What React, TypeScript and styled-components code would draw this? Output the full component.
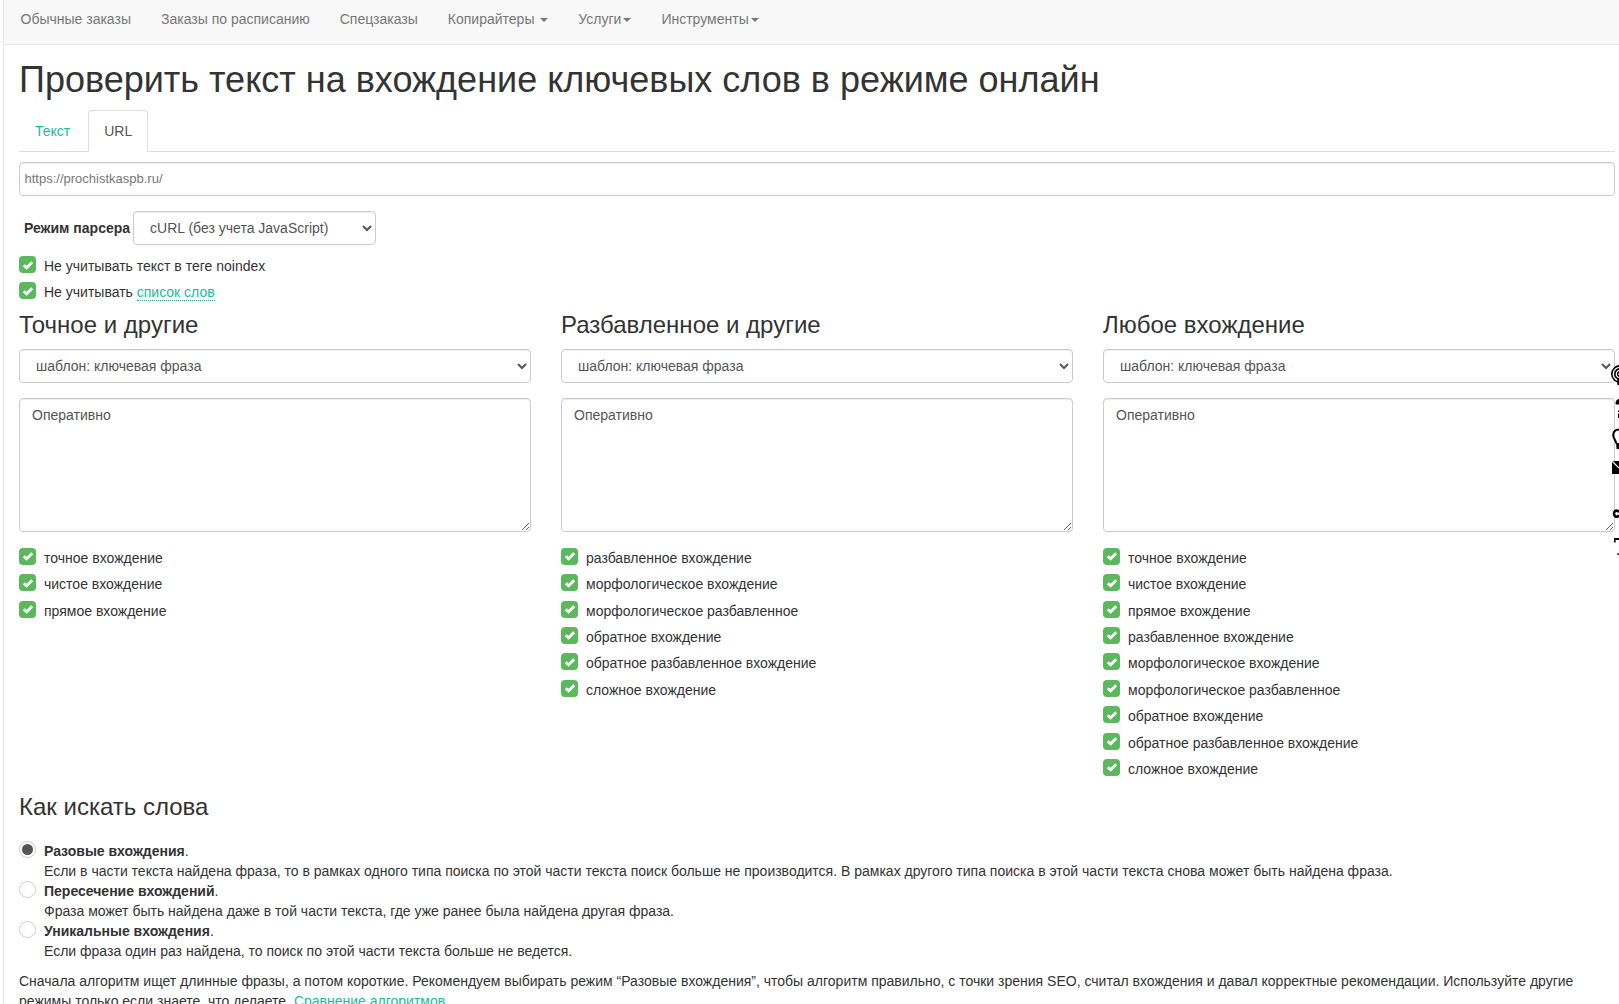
import * as React from 'react'
import styled, { createGlobalStyle } from 'styled-components'

const GlobalStyles = createGlobalStyle`
  html, body {
    margin: 0;
    height: 100%;
    overflow: hidden;
    background: #fff;
  }
  body {
    font-family: "Liberation Sans", Arial, sans-serif;
    font-size: 14px;
    line-height: 20px;
    color: #333;
  }
  * { box-sizing: border-box; }
`

const Page = styled.div`
  margin-left: 3px;
  margin-right: 4px;
  border-left: 1px solid #e7e7e7;
  height: 1004px;
`

const Navbar = styled.nav`
  display: flex;
  align-items: center;
  height: 45px;
  margin-right: -4px;
  padding: 0 0 6px 1.5px;
  background: #f8f8f8;
  border-bottom: 1px solid #e7e7e7;
`

const NavLink = styled.a`
  color: #777;
  padding: 0 15px;
  white-space: nowrap;
`

const Caret = styled.span`
  display: inline-block;
  width: 0;
  height: 0;
  margin-left: 2px;
  vertical-align: middle;
  border-top: 4px solid #777;
  border-left: 4px solid transparent;
  border-right: 4px solid transparent;
`

const Content = styled.main`
  padding: 0 0 0 15px;
`

const Title = styled.h1`
  margin: 15px 0 10px;
  font-size: 36px;
  line-height: 40px;
  font-weight: 500;
  color: #333;
`

const Tabs = styled.div`
  display: flex;
  gap: 2px;
  height: 42px;
  border-bottom: 1px solid #ddd;
`

const Tab = styled.a<{ $active?: boolean }>`
  height: 42px;
  padding: 10px 15px;
  border: 1px solid ${p => (p.$active ? '#ddd' : 'transparent')};
  border-bottom-color: ${p => (p.$active ? '#fff' : 'transparent')};
  border-radius: 4px 4px 0 0;
  color: ${p => (p.$active ? '#555' : '#18bc9c')};
  background: ${p => (p.$active ? '#fff' : 'transparent')};
`

const UrlInput = styled.input`
  display: block;
  width: 100%;
  height: 34px;
  margin-top: 10px;
  padding: 0 4.5px 2px;
  border: 1px solid #ccc;
  border-radius: 4px;
  font: 13px "Liberation Sans", Arial, sans-serif;
  color: #777;
  box-shadow: inset 0 1px 1px rgba(0, 0, 0, .075);
`

const ParserRow = styled.div`
  display: flex;
  align-items: center;
  gap: 3px;
  margin: 15px 0 0 5px;
`

const Select = styled.select<{ $wide?: boolean }>`
  display: block;
  width: ${p => (p.$wide ? '100%' : '243px')};
  height: 34px;
  padding: 0 12px;
  border: 1px solid #ccc;
  border-radius: 4px;
  background: #fff;
  color: #555;
  font: 14px "Liberation Sans", Arial, sans-serif;
  box-shadow: inset 0 1px 1px rgba(0, 0, 0, .075);
`

const CheckList = styled.div`
  display: flex;
  flex-direction: column;
`

const ParserChecks = styled(CheckList)`
  margin-top: 11px;
`

const CheckRow = styled.label`
  display: flex;
  align-items: flex-start;
  height: 26.4px;
  gap: 8px;
  line-height: 20px;
`

const CheckBox = styled.span`
  flex: none;
  display: flex;
  align-items: center;
  justify-content: center;
  width: 17px;
  height: 17px;
  border-radius: 4px;
  background: #5cb85c;
`

const DottedLink = styled.a`
  color: #18bc9c;
  border-bottom: 1px dotted #18bc9c;
`

const PlainLink = styled.a`
  color: #18bc9c;
`

const Columns = styled.div`
  display: grid;
  grid-template-columns: repeat(3, 1fr);
  gap: 30px;
`

const ColumnTitle = styled.h3`
  margin: 1px 0 9px;
  font-size: 24px;
  line-height: 30px;
  font-weight: 500;
`

const TextArea = styled.textarea`
  display: block;
  width: 100%;
  height: 134px;
  margin: 15px 0 16px;
  padding: 6px 12px;
  border: 1px solid #ccc;
  border-radius: 4px;
  color: #555;
  font: 14px/20px "Liberation Sans", Arial, sans-serif;
  box-shadow: inset 0 1px 1px rgba(0, 0, 0, .075);
`

const SectionTitle = styled.h3`
  margin: 0 0 19px;
  padding-top: 7px;
  font-size: 24px;
  line-height: 30px;
  font-weight: 500;
`

const RadioRow = styled.div`
  display: flex;
  gap: 8px;
`

const Radio = styled.span<{ $checked?: boolean }>`
  flex: none;
  display: flex;
  align-items: center;
  justify-content: center;
  width: 17px;
  height: 17px;
  border-radius: 50%;
  border: 1px solid #ccc;
  background: #fff;
  &::after {
    content: '';
    display: ${p => (p.$checked ? 'block' : 'none')};
    width: 11px;
    height: 11px;
    border-radius: 50%;
    background: #555;
  }
`

const Note = styled.p`
  margin: 10px 0 0;
  line-height: 20px;
`

const SideIcons = styled.svg`
  position: fixed;
  top: 360px;
  left: 1609px;
`

const CheckMark = () => (
  <svg width="12" height="12" viewBox="0 0 12 12" aria-hidden="true">
    <path d="M1.8 6.2 4.6 8.8 10.2 3.2" fill="none" stroke="#fff" strokeWidth="2.8" />
  </svg>
)

// floating share widget, almost entirely pushed past the right edge of the window
const FloatingIcons = () => (
  <SideIcons width="10" height="200" viewBox="1609 360 10 200" aria-hidden="true">
    <g fill="none" stroke="#000" strokeWidth="1.6">
      <circle cx="1620" cy="374" r="8.2" />
      <circle cx="1620" cy="374" r="5.2" />
      <circle cx="1620" cy="374" r="2.4" />
      <path d="M1618.5 378v7" strokeWidth="2.4" />
      <path d="M1619.5 429.5c-4-.4-6.6 2.6-6.3 6 .2 3 2.6 4.4 3 8" strokeWidth="2" />
      <path d="M1619 512c-3-3-5-.6-5 1.6s2 4.6 5 2" strokeWidth="2.6" />
    </g>
    <path d="M1615.5 403c.3-2.4 2-4 3.5-4v5.5h-3z" />
    <path d="M1618 410.5h1.2v1.5H1618zM1618 413.5h1.2v4.5H1618z" />
    <path d="M1616 443h3v6h-2.4z" />
    <path d="M1612 461h7v13h-7z" />
    <path d="M1612 461l7 7" stroke="#fff" strokeWidth="1.2" />
    <path d="M1614 538h5v2h-3.4v2.6H1614z" />
    <path d="M1617 553.5h2v1.2h-2z" />
  </SideIcons>
)

const Option: React.FC<{ children: React.ReactNode }> = ({ children }) => (
  <CheckRow>
    <CheckBox><CheckMark /></CheckBox>
    <span>{ children }</span>
  </CheckRow>
)

const columns = [
  {
    title: 'Точное и другие',
    options: ['точное вхождение', 'чистое вхождение', 'прямое вхождение'],
  },
  {
    title: 'Разбавленное и другие',
    options: [
      'разбавленное вхождение',
      'морфологическое вхождение',
      'морфологическое разбавленное',
      'обратное вхождение',
      'обратное разбавленное вхождение',
      'сложное вхождение',
    ],
  },
  {
    title: 'Любое вхождение',
    options: [
      'точное вхождение',
      'чистое вхождение',
      'прямое вхождение',
      'разбавленное вхождение',
      'морфологическое вхождение',
      'морфологическое разбавленное',
      'обратное вхождение',
      'обратное разбавленное вхождение',
      'сложное вхождение',
    ],
  },
]

const modes = [
  {
    name: 'Разовые вхождения',
    text: 'Если в части текста найдена фраза, то в рамках одного типа поиска по этой части текста поиск больше не производится. В рамках другого типа поиска в этой части текста снова может быть найдена фраза.',
    checked: true,
  },
  {
    name: 'Пересечение вхождений',
    text: 'Фраза может быть найдена даже в той части текста, где уже ранее была найдена другая фраза.',
  },
  {
    name: 'Уникальные вхождения',
    text: 'Если фраза один раз найдена, то поиск по этой части текста больше не ведется.',
  },
]

const App: React.FC = () => (
  <Page>
    <GlobalStyles />
    <Navbar>
      <NavLink>Обычные заказы</NavLink>
      <NavLink>Заказы по расписанию</NavLink>
      <NavLink>Спецзаказы</NavLink>
      <NavLink>Копирайтеры <Caret /></NavLink>
      <NavLink>Услуги<Caret /></NavLink>
      <NavLink>Инструменты<Caret /></NavLink>
    </Navbar>
    <Content>
      <Title>Проверить текст на вхождение ключевых слов в режиме онлайн</Title>
      <Tabs>
        <Tab>Текст</Tab>
        <Tab $active>URL</Tab>
      </Tabs>
      <UrlInput readOnly value="https://prochistkaspb.ru/" />
      <ParserRow>
        <b>Режим парсера</b>
        <Select defaultValue="curl">
          <option value="curl">cURL (без учета JavaScript)</option>
        </Select>
      </ParserRow>
      <ParserChecks>
        <Option>Не учитывать текст в теге noindex</Option>
        <Option>Не учитывать <DottedLink>список слов</DottedLink></Option>
      </ParserChecks>
      <Columns>
        { columns.map(column => (
          <div key={ column.title }>
            <ColumnTitle>{ column.title }</ColumnTitle>
            <Select $wide defaultValue="phrase">
              <option value="phrase">шаблон: ключевая фраза</option>
            </Select>
            <TextArea readOnly value="Оперативно" />
            <CheckList>
              { column.options.map(option => <Option key={ option }>{ option }</Option>) }
            </CheckList>
          </div>
        )) }
      </Columns>
      <SectionTitle>Как искать слова</SectionTitle>
      { modes.map(mode => (
        <RadioRow key={ mode.name }>
          <Radio $checked={ mode.checked } />
          <div>
            <b>{ mode.name }</b>.<br />
            { mode.text }
          </div>
        </RadioRow>
      )) }
      <Note>
        Сначала алгоритм ищет длинные фразы, а потом короткие. Рекомендуем выбирать режим “Разовые вхождения”, чтобы алгоритм правильно, с точки зрения SEO, считал вхождения и давал корректные рекомендации. Используйте другие режимы только если знаете, что делаете. <PlainLink>Сравнение алгоритмов</PlainLink>
      </Note>
    </Content>
    <FloatingIcons />
  </Page>
)

export default App
